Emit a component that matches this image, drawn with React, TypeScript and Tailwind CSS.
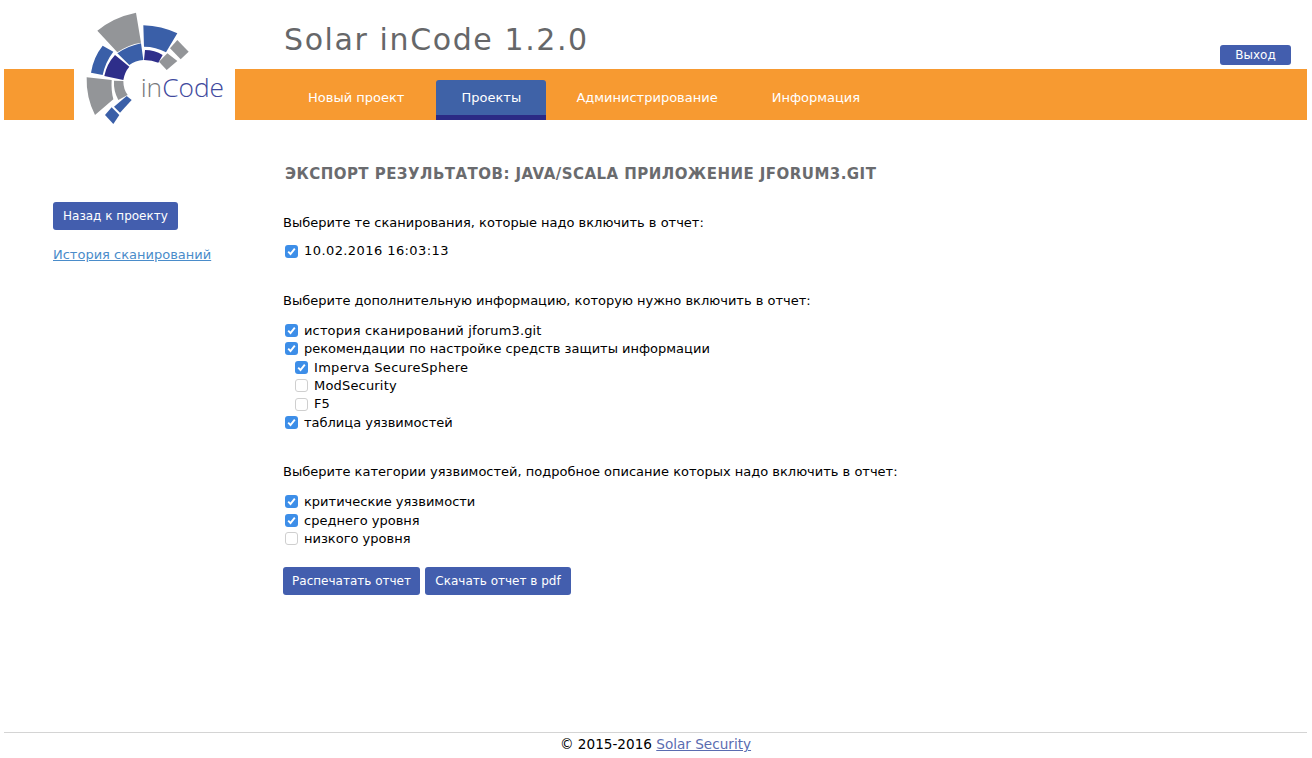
import React from 'react';

const font = "font-['DejaVu_Sans',Verdana,sans-serif]";

// Solar inCode mark, traced from the reference
const Logo = () => (
  <svg width="190" height="130" viewBox="0 0 570 390" className="block">
    <g fill="#939598">
      <path d="M112 92Q160 52 228 38L243 128Q204 134 172 157Z" />
      <path d="M352 120L386 155L362 178L330 145Z" />
      <path d="M322 160L352 183L320 210L297 185Z" />
      <path d="M80 232L155 240Q153 272 160 298L105 345Q78 292 80 232Z" />
      <path d="M162 242L190 243Q190 268 203 285L175 300Q160 272 162 242Z" />
    </g>
    <g fill="#3a5fa8">
      <path d="M250 76Q305 78 352 100L318 157Q288 140 252 140Z" />
      <path d="M172 160Q204 138 243 130L250 180Q226 182 208 195Z" />
      <path d="M128 137L160 155Q136 186 128 225L93 218Q100 172 128 137Z" />
      <path d="M200 288L215 300L180 338L162 320Z" />
      <path d="M155 322L178 345L160 372L135 345Z" />
    </g>
    <g fill="#2e2e8a">
      <path d="M255 150Q284 150 308 165L295 188Q276 180 252 180Z" />
      <path d="M165 165L208 200Q194 216 190 240L133 228Q140 192 165 165Z" />
    </g>
    <text x="242" y="290" fontSize="79" fontWeight="300" fontFamily="'Open Sans',sans-serif">
      <tspan fill="#77787b">in</tspan>
      <tspan fill="#3f4a9e">Code</tspan>
    </text>
  </svg>
);

const Check = ({
  checked,
  label,
  indent,
  className,
}: {
  checked?: boolean;
  label: string;
  indent?: boolean;
  className?: string;
}) => (
  <label className={`flex items-center h-[18.4px] ${indent ? 'pl-3' : 'pl-[2px]'}`}>
    {checked ? (
      <span className="w-[13px] h-[13px] rounded-[3px] bg-[#3d8ee8] flex items-center justify-center">
        <svg width="11" height="11" viewBox="0 0 11 11" fill="none" stroke="#fff" strokeWidth="1.9">
          <path d="M2.2 5.6L4.5 8L8.8 2.6" />
        </svg>
      </span>
    ) : (
      <span className="w-[13px] h-[13px] rounded-[3px] bg-white border border-[#cfcfcf]" />
    )}
    <span className={`ml-[6px] ${className ?? ''}`}>{label}</span>
  </label>
);

const Btn = ({ children, className }: { children: React.ReactNode; className?: string }) => (
  <button
    type="button"
    className={`h-[28px] rounded-[3px] bg-[#435eae] text-white text-[12px] leading-none ${className ?? 'px-[10px]'}`}
  >
    {children}
  </button>
);

const navItems = ['Новый проект', 'Проекты', 'Администрирование', 'Информация'];

export default function App() {
  return (
    <div className={`${font} flex flex-col h-[758px] pl-1 pr-[5px] bg-white text-[13px] text-black overflow-hidden`}>
      {/* Header */}
      <div className="flex h-[69px] pl-[280px] pr-[16px] justify-between">
        <div className="pt-[18px] text-[30px] leading-[44px] tracking-[1.6px] text-[#666769]">Solar inCode 1.2.0</div>
        <div className="pt-[45px]">
          <button type="button" className="w-[71px] h-[20px] rounded-[3px] bg-[#435eae] text-white text-[12px] leading-none">
            Выход
          </button>
        </div>
      </div>

      {/* Orange bar */}
      <div className="flex h-[51px] bg-[#f79a31] shrink-0">
        <div className="relative w-[161px] ml-[70px] bg-white">
          <div className="absolute left-[-14px] bottom-[-10px]">
            <Logo />
          </div>
        </div>
        <nav className="flex items-end ml-[46px] text-white text-[13px] h-full">
          {navItems.map((item, i) => (
            <div
              key={item}
              className={
                i === 1
                  ? 'h-[40px] w-[110px] justify-center ml-[5px] mr-[3px] rounded-t-[3px] bg-[#3f62a7] border-b-[5px] border-[#2b2a85] flex items-center pt-[1px]'
                  : 'h-[40px] px-[27px] flex items-center pb-[4px]'
              }
            >
              {item}
            </div>
          ))}
        </nav>
      </div>

      {/* Body */}
      <div className="flex flex-1">
        <aside className="w-[279px] pl-[49px] pt-[82px] shrink-0">
          <Btn>Назад к проекту</Btn>
          <div className="mt-[15px]">
            <a href="#" className="text-[#4a8cca] underline">История сканирований</a>
          </div>
        </aside>

        <main className="pt-[44px]">
          <h1 className="pl-[2px] text-[15px] leading-[20px] font-bold uppercase tracking-[0.46px] text-[#6a6b6e]">
            Экспорт результатов: Java/Scala приложение jforum3.git
          </h1>

          <p className="mt-[30px] leading-[18px]">Выберите те сканирования, которые надо включить в отчет:</p>
          <div className="mt-[10px]">
            <Check checked label="10.02.2016 16:03:13" className="tracking-[0.42px]" />
          </div>

          <p className="mt-[32px] leading-[18px]">Выберите дополнительную информацию, которую нужно включить в отчет:</p>
          <div className="mt-[11px]">
            <Check checked label="история сканирований jforum3.git" className="tracking-[0.15px]" />
            <Check checked label="рекомендации по настройке средств защиты информации" />
            <Check indent checked label="Imperva SecureSphere" className="tracking-[0.3px]" />
            <Check indent label="ModSecurity" className="tracking-[0.18px]" />
            <Check indent label="F5" />
            <Check checked label="таблица уязвимостей" />
          </div>

          <p className="mt-[31px] leading-[18px]">Выберите категории уязвимостей, подробное описание которых надо включить в отчет:</p>
          <div className="mt-[12px]">
            <Check checked label="критические уязвимости" />
            <Check checked label="среднего уровня" />
            <Check label="низкого уровня" />
          </div>

          <div className="flex gap-[5px] mt-[19px]">
            <Btn className="w-[137px]">Распечатать отчет</Btn>
            <Btn className="w-[146px]">Скачать отчет в pdf</Btn>
          </div>
        </main>
      </div>

      {/* Footer */}
      <footer className="h-[26px] border-t border-[#d4d4d4] text-center text-[13.6px] leading-[22px]">
        © 2015-2016 <a href="#" className="text-[#5a6cb0] underline">Solar Security</a>
      </footer>
    </div>
  );
}
